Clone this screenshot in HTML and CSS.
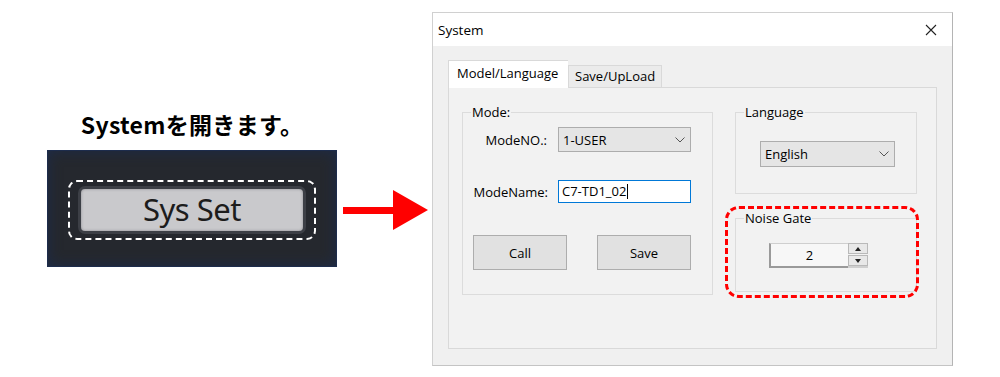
FILE: index.html
```html
<!DOCTYPE html>
<html lang="ja">
<head>
    <meta charset="UTF-8">
    <meta name="viewport" content="width=device-width, initial-scale=1.0">
    <title>System</title>
    <link rel="stylesheet" href="styles.css">
</head>
<body>
    <div class="page">
        <div class="intro">
            <h1>Systemを開きます。</h1>
            <div class="panel">
                <div class="focus-ring">
                    <div class="sys-btn">Sys Set</div>
                </div>
            </div>
        </div>

        <svg class="arrow" width="86" height="40" viewBox="0 0 86 40">
            <rect x="0" y="17" width="51" height="7" fill="#ff0000"/>
            <polygon points="50,0 85,20 50,40" fill="#ff0000"/>
        </svg>

        <div class="dialog">
            <div class="titlebar">
                <span>System</span>
                <svg class="close" width="12" height="12" viewBox="0 0 12 12">
                    <path d="M1 1 L11 11 M11 1 L1 11" stroke="#222" stroke-width="1.1"/>
                </svg>
            </div>
            <div class="dialog-body">
                <div class="tabs">
                    <div class="tab active">Model/Language</div>
                    <div class="tab">Save/UpLoad</div>
                </div>
                <div class="tab-page">
                    <fieldset class="group mode">
                        <legend>Mode:</legend>
                        <div class="group-body">
                            <div class="row">
                                <label class="lbl no">ModeNO.:</label>
                                <div class="combo">
                                    <span>1-USER</span>
                                    <svg width="10" height="6" viewBox="0 0 10 6"><path d="M0.5 0.5 L5 5 L9.5 0.5" fill="none" stroke="#555" stroke-width="1"/></svg>
                                </div>
                            </div>
                            <div class="row name-row">
                                <label class="lbl">ModeName:</label>
                                <div class="textbox">C7-TD1_02<span class="caret"></span></div>
                            </div>
                            <div class="buttons">
                                <button class="btn">Call</button>
                                <button class="btn">Save</button>
                            </div>
                        </div>
                    </fieldset>

                    <div class="side">
                        <fieldset class="group lang">
                            <legend>Language</legend>
                            <div class="group-body">
                                <div class="combo wide">
                                    <span>English</span>
                                    <svg width="10" height="6" viewBox="0 0 10 6"><path d="M0.5 0.5 L5 5 L9.5 0.5" fill="none" stroke="#555" stroke-width="1"/></svg>
                                </div>
                            </div>
                        </fieldset>

                        <div class="noise-wrap">
                            <fieldset class="group noise">
                                <legend>Noise Gate</legend>
                                <div class="group-body">
                                    <div class="spinner">
                                        <div class="spin-value">2</div>
                                        <div class="spin-btns">
                                            <div class="spin-up"></div>
                                            <div class="spin-down"></div>
                                        </div>
                                    </div>
                                </div>
                            </fieldset>
                            <div class="highlight"></div>
                        </div>
                    </div>
                </div>
            </div>
        </div>
    </div>
</body>
</html>
```

FILE: styles.css
```css
body {
    margin: 0;
    background: #fff;
    font-family: "Open Sans", "Noto Sans", sans-serif;
}
.page {
    display: flex;
    align-items: flex-start;
    width: 1000px;
    height: 377px;
}

/* left side */
.intro {
    margin-left: 47px;
    padding-top: 108px;
    width: 290px;
}
h1 {
    margin: 0 0 10px;
    font-family: "Noto Sans CJK JP", "Noto Sans", sans-serif;
    font-size: 23px;
    font-weight: 700;
    line-height: 32px;
    text-align: center;
    color: #000;
    letter-spacing: 0.3px;
}
.panel {
    box-sizing: border-box;
    height: 117px;
    background: #25282e;
    border: 1px solid #1d2c4c;
    box-shadow: inset 0 0 14px #1d2b49;
    display: flex;
    align-items: center;
    justify-content: center;
    padding-top: 3px;
}
.focus-ring {
    box-sizing: border-box;
    width: 248px;
    height: 60px;
    border: 2px dashed #fff;
    border-radius: 9px;
    display: flex;
    align-items: center;
    justify-content: center;
}
.sys-btn {
    box-sizing: border-box;
    width: 228px;
    height: 48px;
    background: #c9c9cc;
    border: 3px solid #3c3f46;
    border-radius: 7px;
    box-shadow: inset 0 0 3px #8a8a90;
    font-family: "Noto Sans", sans-serif;
    font-size: 31px;
    line-height: 40px;
    text-align: center;
    color: #1c1c1c;
    letter-spacing: -0.5px;
}

.arrow {
    margin-left: 6px;
    margin-top: 190px;
}

/* dialog */
.dialog {
    box-sizing: border-box;
    margin-left: 3px;
    margin-top: 12px;
    width: 521px;
    height: 354px;
    background: #f0f0f0;
    border: 1px solid #d0d0d0;
    border-right-color: #b4b4b4;
    border-bottom-color: #c4c4c4;
}
.titlebar {
    height: 33px;
    background: #fff;
    display: flex;
    align-items: center;
    justify-content: space-between;
    padding: 0 15px 0 5px;
    font-size: 13.5px;
    color: #000;
}
.dialog-body {
    padding: 14px 15px 0 15px;
}
.tabs {
    display: flex;
    align-items: flex-end;
    height: 27px;
    position: relative;
    z-index: 1;
}
.tab {
    box-sizing: border-box;
    height: 22px;
    padding: 0 6px;
    border: 1px solid #d9d9d9;
    border-bottom: none;
    background: #ebebeb;
    font-size: 13px;
    line-height: 21px;
    color: #000;
}
.tab.active {
    height: 28px;
    width: 120px;
    margin-bottom: -1px;
    background: #fff;
    line-height: 24px;
    padding: 0 8px;
    border-right: none;
}
.tab-page {
    box-sizing: border-box;
    width: 489px;
    height: 262px;
    background: #f2f2f2;
    border: 1px solid #d9d9d9;
    display: flex;
    align-items: flex-start;
    padding: 16px 0 0 13px;
}

.group {
    margin: 0;
    padding: 0;
    min-width: 0;
    border: 1px solid #dcdcdc;
    box-sizing: border-box;
}
.group legend {
    padding: 0 1px;
    margin: 0 auto 0 8px;
    font-size: 13px;
    line-height: 16px;
    text-align: left;
    color: #000;
}
.mode {
    width: 251px;
    height: 191px;
}
.mode .group-body {
    padding: 7px 0 0 10px;
}
.row {
    display: flex;
    align-items: center;
    gap: 10px;
}
.name-row {
    margin-top: 28px;
}
.lbl {
    width: 75px;
    text-align: right;
    font-size: 13px;
    color: #000;
}
.lbl.no {
    width: 74px;
    margin-right: 1px;
}
.combo {
    box-sizing: border-box;
    width: 133px;
    height: 25px;
    background: #e5e5e5;
    border: 1px solid #adadad;
    display: flex;
    align-items: center;
    justify-content: space-between;
    padding: 0 5px 0 4px;
    font-size: 13px;
    color: #000;
}
.combo.wide {
    width: 135px;
    height: 26px;
}
.textbox {
    box-sizing: border-box;
    width: 133px;
    height: 23px;
    background: #fff;
    border: 1px solid #0078d7;
    padding: 0 3px;
    font-size: 13px;
    line-height: 21px;
    color: #000;
    display: flex;
    align-items: center;
}
.caret {
    display: inline-block;
    width: 1px;
    height: 15px;
    background: #000;
    margin-left: 1px;
}
.buttons {
    display: flex;
    gap: 30px;
    margin-top: 32px;
}
.btn {
    box-sizing: border-box;
    width: 94px;
    height: 35px;
    background: #e1e1e1;
    border: 1px solid #adadad;
    font-family: "Open Sans", "Noto Sans", sans-serif;
    font-size: 13px;
    color: #000;
    padding: 0;
}

.side {
    margin-left: 22px;
    display: flex;
    flex-direction: column;
    gap: 16px;
}
.lang {
    width: 182px;
    height: 90px;
}
.lang .group-body {
    padding: 21px 0 0 24px;
}
.noise-wrap {
    position: relative;
}
.noise {
    width: 182px;
    height: 82px;
}
.noise .group-body {
    padding: 17px 0 0 33px;
}
.highlight {
    position: absolute;
    left: -10px;
    top: -4px;
    width: 194px;
    height: 92px;
    box-sizing: border-box;
    border: 3px dashed #ff0000;
    border-radius: 14px;
}
.spinner {
    display: flex;
    height: 25px;
}
.spin-value {
    box-sizing: border-box;
    width: 79px;
    height: 25px;
    background: #f7f7f7;
    border-top: 1px solid #cfcfcf;
    border-left: 2px solid #9a9a9a;
    border-bottom: 2px solid #9a9a9a;
    font-size: 13px;
    line-height: 22px;
    text-align: center;
    color: #000;
}
.spin-btns {
    box-sizing: border-box;
    width: 20px;
    height: 25px;
    display: flex;
    flex-direction: column;
    gap: 1px;
    border-bottom: 2px solid #cfcfcf;
}
.spin-up, .spin-down {
    flex: 1;
    background: #e8e8e8;
    border: 1px solid #b9b9b9;
    display: flex;
    align-items: center;
    justify-content: center;
}
.spin-up::after {
    content: "";
    border-left: 3px solid transparent;
    border-right: 3px solid transparent;
    border-bottom: 4px solid #222;
}
.spin-down::after {
    content: "";
    border-left: 3px solid transparent;
    border-right: 3px solid transparent;
    border-top: 4px solid #222;
}
```
